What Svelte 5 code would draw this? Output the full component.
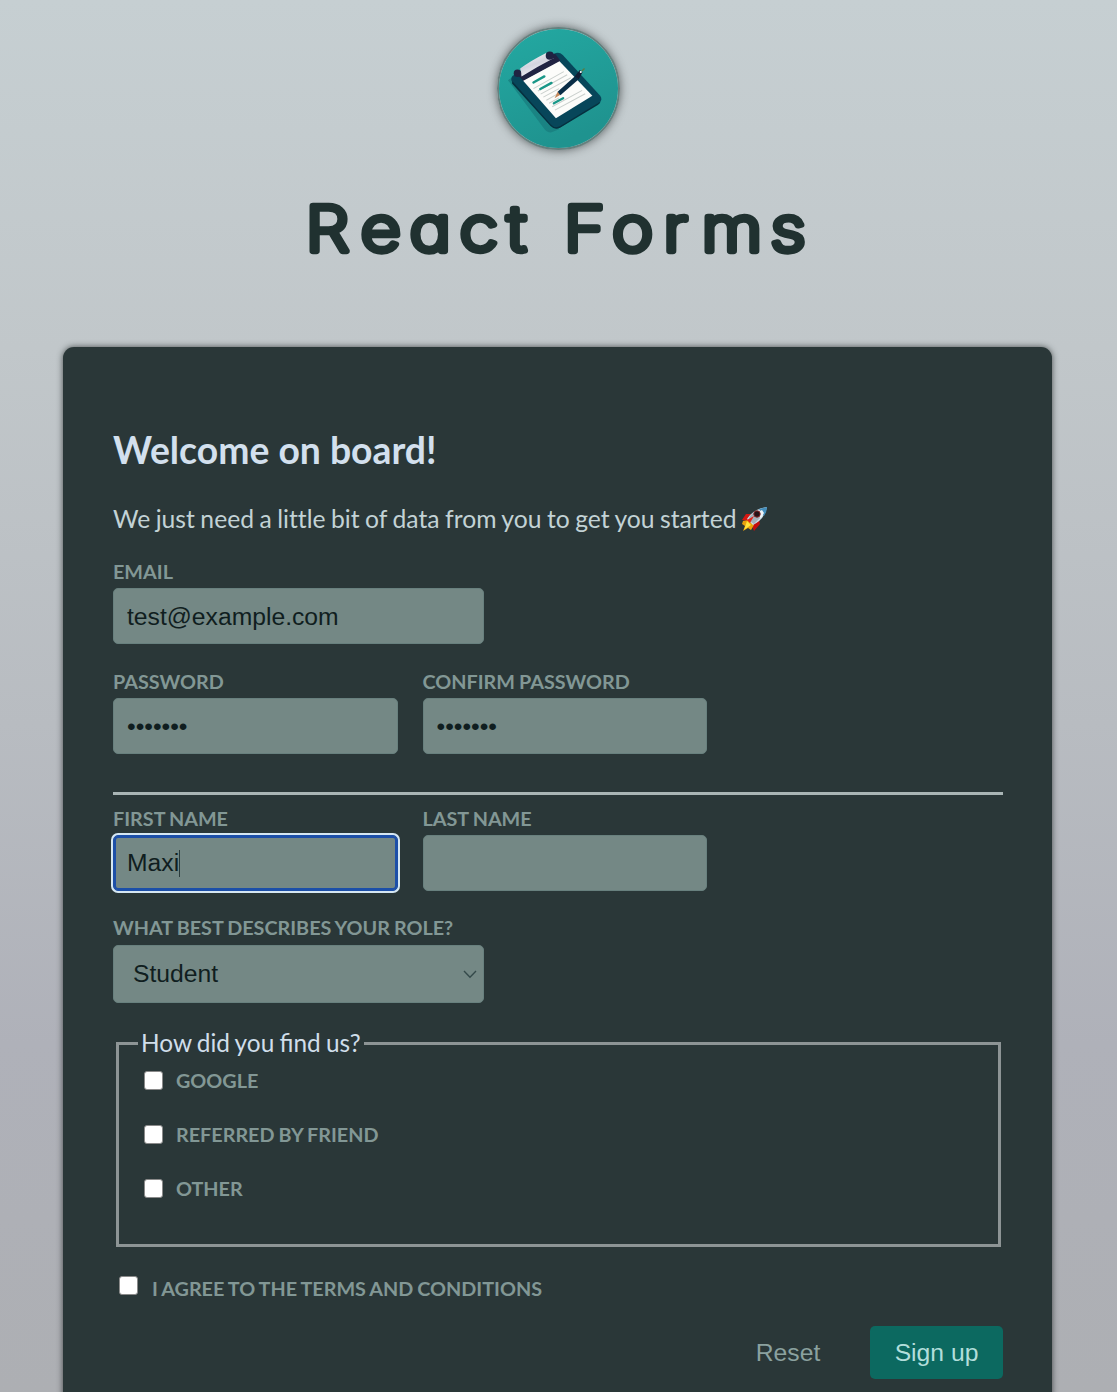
<script>
  const sources = ['Google', 'Referred by friend', 'Other'];
</script>

<header>
  <svg class="logo" viewBox="0 0 360 360" aria-label="Clipboard">
    <defs>
      <linearGradient id="teal" x1="0" y1="0" x2="0.4" y2="1">
        <stop offset="0" stop-color="#23a9a2" />
        <stop offset="1" stop-color="#1f938f" />
      </linearGradient>
      <linearGradient id="clip" x1="0" y1="0" x2="0.5" y2="1">
        <stop offset="0" stop-color="#ffffff" />
        <stop offset="0.55" stop-color="#d3d4df" />
        <stop offset="1" stop-color="#f4f4f8" />
      </linearGradient>
    </defs>
    <rect width="360" height="360" fill="url(#teal)" />
    <g transform="translate(-8 -8) scale(1.03)">
      <path d="M34 158 50 148 185 302 160 312Q148 311 140 300Z" fill="#187c7d" opacity=".75" />
      <path d="M48 145 175 78Q186 75 195 84L305 204Q313 216 303 224L188 296Q172 304 160 291L47 164Q40 154 48 145Z" fill="#07465a" />
      <path d="M47 161 160 288Q172 301 188 293L306 221Q306 227 298 231L187 298Q172 306 159 293L46 168Z" fill="#06303f" />
      <path d="M78 159 184 101 282 204 175 270Z" fill="#fcfcfa" />
      <path d="M62 142 172 80 188 101 79 160Z" fill="#202342" />
      <path d="M70 124Q95 104 146 78L168 94Q120 119 74 147Z" fill="url(#clip)" />
      <circle cx="62" cy="138" r="11" fill="#202342" /><circle cx="157" cy="86" r="12" fill="#202342" />
      <g fill="none" stroke="#c9cfcc" stroke-width="3">
        <path d="M109 183 198 133M122 190 208 142M130 199 219 151M138 208 184 183M147 217 188 194M155 226 184 210M164 236 252 188M172 246 261 198" />
      </g>
      <path d="M109 165 141 147M129 184 162 166M169 226 196 211" stroke="#199788" stroke-width="7" stroke-linecap="round" />
      <path d="M171 211 180 192 188 201Z" fill="#c5885a" />
      <path d="M180 192 230 147 242 155 188 202Z" fill="#092d46" />
      <path d="M230 147 245 128 253 135 242 155Z" fill="#111b32" />
      <circle cx="248" cy="134" r="3" fill="#fff" /><path d="m251 131 8-7" stroke="#587c42" stroke-width="4" />
    </g>
  </svg>
  <h1>
    <svg class="title" viewBox="0 0 520 80">
      <text transform="scale(1.12 1)" x="6.1 55.2 98.9 143.5 185.9 212 236.7 279.7 325.5 359.5 420.9" y="51.8">React Forms</text>
    </svg>
  </h1>
</header>

<form>
  <h2>Welcome on board!</h2>
  <p class="intro">
    We just need a little bit of data from you to get you started
    <svg class="rocket" viewBox="0 0 26 26">
      <path d="M4 8 9 8 6 15 0 14Z" fill="#d51712" />
      <path d="M12 16 17 14 18 18 12 25 10 20Z" fill="#c40e0e" />
      <path d="M1 15 7 14 12 19 9 24 6 22 1 25 3 20 0 18Z" fill="#e8a20c" />
      <path d="M2 24 5 15 9 19Z" fill="#ffe33b" />
      <path d="M5 13Q11 3 25 1 23 13 11 19Z" fill="#cfe0e9" />
      <path d="M8 10 13 5 18 12 12 18 6 14Z" fill="#a6b3bb" />
      <path d="M17 3 25 1Q25 6 22 10Z" fill="#438dbb" />
      <path d="m20 4 2 3-3 5-5-5Z" fill="#eef5f8" />
      <circle cx="15" cy="8" r="3.2" fill="#251317" stroke="#852525" />
      <path d="m5 14 7-4-4 7Z" fill="#e3251b" />
    </svg>
  </p>

  <div class="field wide">
    <label for="email">Email</label>
    <input id="email" type="email" value="test@example.com" />
  </div>
  <div class="row">
    <div class="field">
      <label for="password">Password</label>
      <input id="password" type="password" value="secret1" />
    </div>
    <div class="field">
      <label for="confirm">Confirm Password</label>
      <input id="confirm" type="password" value="secret1" />
    </div>
  </div>
  <hr />
  <div class="row">
    <div class="field">
      <label for="first">First Name</label>
      <div id="first" class="control active">Maxi<span class="caret"></span></div>
    </div>
    <div class="field">
      <label for="last">Last Name</label>
      <input id="last" type="text" />
    </div>
  </div>
  <div class="field wide role">
    <label for="role">What best describes your role?</label>
    <div id="role" class="control select">
      <span>Student</span>
      <svg class="chevron" viewBox="0 0 14 9"><path d="m1 1 6 6.2L13 1" /></svg>
    </div>
  </div>
  <fieldset>
    <legend>How did you find us?</legend>
    {#each sources as source}
      <label class="option"><span class="box"></span>{source}</label>
    {/each}
  </fieldset>
  <label class="option terms"><span class="box"></span>I agree to the terms and conditions</label>
  <div class="actions">
    <button type="reset" class="flat">Reset</button>
    <button type="button" class="primary">Sign up</button>
  </div>
</form>

<style>
  :global(body) {
    height: 1392px;
    overflow: hidden;
    background: linear-gradient(180deg, #c6cfd2 0%, #c1c7ca 25%, #b8bcc1 52%, #afb1b9 75%, #adafb3 100%);
    font-family: Lato, sans-serif;
  }
  header {
    height: 347px;
    display: flex;
    flex-direction: column;
    align-items: center;
    box-sizing: border-box;
    padding-top: 27px;
  }
  .logo {
    width: 119px;
    height: 119px;
    flex: none;
    border: 2px solid #66807e;
    border-radius: 50%;
    box-shadow: 0 0 10px rgba(30, 35, 35, 0.65);
  }
  h1 { margin: 49px 0 0; line-height: 0; }
  .title { width: 520px; height: 80px; overflow: visible; }
  .title text {
    font: 200 62px Inter, sans-serif;
    font-optical-sizing: none;
    font-feature-settings: 'cv11';
    fill: #203130;
    stroke: #203130;
    stroke-width: 6.3px;
    stroke-linejoin: round;
  }
  form {
    box-sizing: border-box;
    width: 989px;
    height: 1100px;
    margin-left: 63px;
    padding: 79px 49px 0 50px;
    border-radius: 11px;
    background: #2a3738;
    box-shadow: 0 0 6px rgba(20, 25, 25, 0.7);
  }
  h2 {
    margin: 0;
    color: #d3e0ee;
    font-size: 37.3px;
    font-weight: 700;
    line-height: 48px;
  }
  .intro {
    display: flex;
    align-items: center;
    gap: 5px;
    margin: 27px 0 -1px;
    color: #c2d2d5;
    font-size: 24.7px;
    font-variant-ligatures: none;
    word-spacing: -0.85px;
    line-height: 36px;
    white-space: nowrap;
  }
  .rocket { width: 26px; height: 26px; }
  .field { width: 284.5px; padding-top: 23px; }
  .wide { width: 371px; }
  .row { display: flex; gap: 25px; }
  label {
    display: block;
    color: #829795;
    font-size: 19.8px;
    font-weight: 700;
    line-height: 24px;
    text-transform: uppercase;
    white-space: nowrap;
    word-spacing: -0.8px;
  }
  .wide + .row { margin-top: 2px; }
  .row + .wide { margin-top: 1px; }
  .field > label { padding-bottom: 5px; }
  .role > label { padding-bottom: 6px; }
  input, .control {
    box-sizing: border-box;
    display: flex;
    align-items: center;
    width: 100%;
    height: 56px;
    margin: 0;
    padding: 0 13px;
    border: 1px solid #68807e;
    border-radius: 5px;
    outline: none;
    background: #748885;
    color: #101e20;
    font: 24.7px 'Liberation Sans', Arial, sans-serif;
  }
  input { padding-top: 2px; }
  .active {
    border-color: #1c4fa8;
    box-shadow: inset 0 0 0 2px #1c4fa8, 0 0 0 2px #d5e7f3;
  }
  .caret { width: 1px; height: 27px; background: #2b3b3b; }
  .select { height: 58px; padding: 0 6px 0 19px; justify-content: space-between; }
  .chevron { width: 14px; height: 9px; fill: none; stroke: #34494a; stroke-width: 1.4; }
  hr {
    height: 3px;
    margin: 38px 0 -12px;
    border: 0;
    background: #a9b5b5;
  }
  fieldset {
    box-sizing: border-box;
    width: 885px;
    height: 219px;
    margin: 25px 3px 0;
    padding: 0 25px;
    border: 3px solid #8d9495;
  }
  legend {
    margin: 0 0 10px -6px;
    padding: 0 3px;
    color: #d0deea;
    font-size: 24.4px;
    line-height: 30px;
    word-spacing: -1px;
  }
  .option { display: flex; align-items: center; gap: 13px; }
  fieldset .option { height: 24px; margin-bottom: 30px; }
  .box {
    box-sizing: border-box;
    width: 19px;
    height: 19px;
    border: 1px solid #8a8a8a;
    border-radius: 3px;
    background: #fff;
  }
  .terms { gap: 14px; margin: 29px 0 0 6px; }
  .terms .box { margin-bottom: 5px; }
  .actions { display: flex; justify-content: flex-end; margin-top: 26px; }
  button {
    height: 53px;
    border: 0;
    border-radius: 5px;
    font: 24.7px 'Liberation Sans', Arial, sans-serif;
  }
  .flat { width: 164px; padding: 0; background: none; color: #8ba19f; }
  .primary { width: 133px; padding: 0; background: #0c6960; color: #b2dedb; }
</style>
